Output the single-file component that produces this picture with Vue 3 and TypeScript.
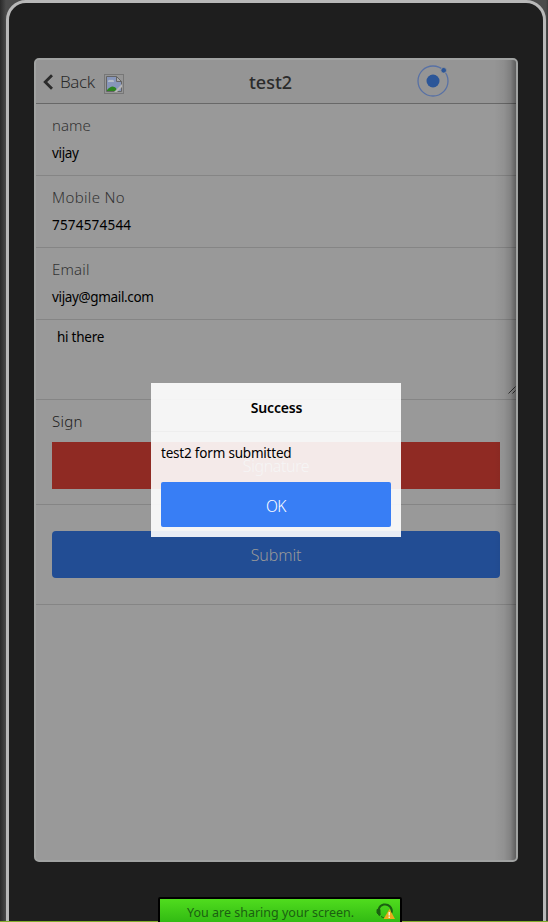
<script setup lang="ts">
interface Field {
  id: string
  label: string
  value: string
}

const title = 'test2'
const fields: Field[] = [
  { id: 'name', label: 'name', value: 'vijay' },
  { id: 'mobile', label: 'Mobile No', value: '7574574544' },
  { id: 'email', label: 'Email', value: 'vijay@gmail.com' },
]
</script>

<template>
  <div class="desk">
    <div class="phone">
      <div class="screen">
        <header class="bar">
          <svg class="chevron" viewBox="0 0 10 16" width="10" height="16">
            <path d="M9 1.2 2.2 8 9 14.8" fill="none" stroke="#2b2b2b" stroke-width="2.8" />
          </svg>
          <span class="back">Back</span>
          <svg class="broken" viewBox="0 0 20 20" width="20" height="20">
            <rect x=".5" y=".5" width="19" height="19" fill="none" stroke="#777" />
            <path d="M2.5 2.5h10l5 5v10h-15z" fill="#8796ba" stroke="#656565" />
            <path d="M4 8a2 2 0 0 1 3-2 2 2 0 0 1 3 2z" fill="#b4bcc8" />
            <path d="M3 17v-1q5-6 9-2l1 3z" fill="#2c8420" />
            <path d="M10 18l8-8v3l-5 5z" fill="#b5b5b5" />
            <path d="M12.5 2.5v5h5z" fill="#aaa" stroke="#656565" />
          </svg>
          <h1 class="title">{{ title }}</h1>
          <svg class="ionic" viewBox="0 0 32 32" width="32" height="32">
            <circle cx="16" cy="16" r="15" fill="none" stroke="#5871a5" stroke-width="1.3" />
            <circle cx="16" cy="16" r="6.5" fill="#2c5698" />
            <circle cx="26.7" cy="5.3" r="2.8" fill="#2c5698" stroke="#969696" stroke-width=".8" />
          </svg>
        </header>

        <main>
          <label v-for="f in fields" :key="f.id" class="item">
            <span class="label" :class="f.id">{{ f.label }}</span>
            <span class="value" :class="f.id">{{ f.value }}</span>
          </label>
          <div class="item note">
            <span class="value there">hi there</span>
            <svg class="grip" viewBox="0 0 8 8" width="8" height="8">
              <path d="M.5 7.5l7-7M4.5 7.5l3-3" stroke="#333" fill="none" />
            </svg>
          </div>
          <div class="item sign">
            <span class="label dark">Sign</span>
            <div class="pad">Signature</div>
          </div>
          <div class="item send">
            <div class="submit">Submit</div>
          </div>
        </main>

        <div class="edge"></div>

        <section class="popup">
          <h2 class="popup-title">Success</h2>
          <div class="popup-body"><span>test2 form submitted</span></div>
          <div class="ok">OK</div>
        </section>
      </div>
    </div>

    <div class="share">
      <span class="share-text">You are sharing your screen.</span>
      <svg class="headset" viewBox="0 0 20 18" width="20" height="18">
        <path d="M4 13.5A6.7 6.7 0 1 1 15.5 11" fill="none" stroke="#1b6011" stroke-width="2" />
        <path d="M1 7.5h3v5H2.500L1 11zM5 14.500l4 2" fill="#1b6011" stroke="#1b6011" />
        <path d="M13.500 7 19 17H7.500z" fill="#e9aa1d" />
        <path d="M13.200 10v3.500M13.200 14.500V16" stroke="#fff" stroke-width="1.200" />
      </svg>
    </div>
  </div>
</template>

<style>
body {
  margin: 0;
  overflow: hidden;
}
</style>

<style scoped>
* {
  box-sizing: border-box;
}
.desk {
  position: relative;
  width: 548px;
  height: 922px;
  padding: 0 2px 0 6px;
  overflow: hidden;
  background: linear-gradient(90deg, #2a2a2a 0, #4b4b4b 6px, #4b4b4b 546px, #3a3a3a 548px);
  font-family: 'Noto Sans', 'Open Sans', sans-serif;
  color: #000;
}
.desk::after {
  content: '';
  position: absolute;
  left: 0;
  right: 0;
  bottom: 0;
  height: 1px;
  background: #83ac2c;
}
.phone {
  width: 540px;
  height: 960px;
  padding: 55px 25px 0;
  border: 3px solid #b8b8b8;
  border-radius: 20px;
  background: #1e1e1e;
}
.screen {
  position: relative;
  width: 484px;
  height: 804px;
  border: 2px solid #a1a3a2;
  border-radius: 5px;
  background: #999;
  overflow: hidden;
}
.bar {
  display: grid;
  grid-template-columns: 7px 10px 7px 44px 20px 124px 45px 124px 32px;
  height: 44px;
  border-bottom: 1px solid #686868;
  background: #959595;
}
.bar > * {
  grid-row: 1;
}
.chevron {
  grid-column: 2;
  margin-top: 14px;
}
.back {
  grid-column: 4;
  font-size: 17px;
  font-weight: 300;
  line-height: 44px;
  letter-spacing: -0.4px;
  color: #2b2b2b;
  white-space: nowrap;
}
.broken {
  grid-column: 5;
  margin-top: 14px;
}
.title {
  grid-column: 7;
  margin: 0;
  font-size: 18px;
  font-weight: 500;
  line-height: 45px;
  text-align: center;
  white-space: nowrap;
  color: #2b2b2b;
}
.ionic {
  grid-column: 9;
  margin-top: 4.5px;
}
.item {
  display: flex;
  flex-direction: column;
  height: 72px;
  padding: 8px 16px 0;
  border-bottom: 1px solid #858585;
}
.label {
  align-self: flex-start;
  font-size: 15px;
  font-weight: 300;
  line-height: 26px;
  color: #333;
  white-space: nowrap;
}
.label.mobile {
  letter-spacing: 0.35px;
}
.label.email {
  letter-spacing: 0.2px;
}
.label.dark {
  letter-spacing: 0.3px;
  color: #222;
}
.value {
  align-self: flex-start;
  margin-top: 3px;
  font-size: 13.5px;
  line-height: 24px;
  letter-spacing: -0.35px;
  white-space: nowrap;
}
.value.mobile {
  letter-spacing: 0.2px;
}
.note {
  position: relative;
  height: 80px;
  padding: 2px 21px 0;
}
.there {
  letter-spacing: -0.25px;
}
.grip {
  position: absolute;
  right: 0;
  bottom: 5px;
}
.sign {
  height: 105px;
}
.pad,
.submit {
  height: 47px;
  font-size: 16px;
  font-weight: 300;
  line-height: 49px;
  text-align: center;
  color: #999;
}
.pad {
  margin-top: 8px;
  letter-spacing: -0.4px;
  background: #8f2a23;
}
.send {
  height: 100px;
  padding-top: 26px;
}
.submit {
  border-radius: 4px;
  letter-spacing: -0.1px;
  background: #224d94;
}
.edge {
  position: absolute;
  top: 0;
  right: 0;
  width: 22px;
  height: 100%;
  background: linear-gradient(90deg, transparent, rgba(0, 0, 0, 0.05) 45%, rgba(0, 0, 0, 0.15) 75%, rgba(0, 0, 0, 0.38));
}
.popup {
  position: absolute;
  left: 115px;
  top: 323px;
  width: 250px;
  height: 154px;
  padding: 0 10px;
  background: rgba(255, 255, 255, 0.9);
}
.popup-title {
  height: 49px;
  margin: 0 -10px;
  border-bottom: 1px solid #eee;
  font-size: 14px;
  font-weight: 600;
  line-height: 50px;
  letter-spacing: -0.2px;
  text-align: center;
  text-indent: 1px;
}
.popup-body {
  height: 50px;
  padding-top: 9px;
  font-size: 13.5px;
  line-height: 24px;
  letter-spacing: -0.2px;
  white-space: nowrap;
}
.ok {
  height: 45px;
  border-radius: 2px;
  background: #387ef5;
  color: #fff;
  font-size: 15.5px;
  font-weight: 300;
  line-height: 48px;
  letter-spacing: -0.5px;
  text-align: center;
}
.share {
  position: absolute;
  z-index: 1;
  left: 158px;
  top: 897px;
  display: flex;
  width: 244px;
  height: 30px;
  padding-left: 27px;
  border: 2px solid #000;
  border-radius: 2px;
  background: linear-gradient(#50dc1e, #32bb13 23px);
}
.share-text {
  width: 189px;
  font-size: 12.500px;
  line-height: 27px;
  white-space: nowrap;
  color: #1b6011;
}
.headset {
  margin-top: 3px;
}
</style>
